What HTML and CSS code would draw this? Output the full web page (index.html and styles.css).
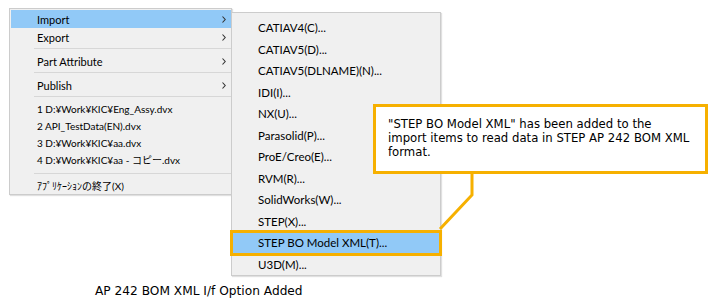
FILE: index.html
```html
<!DOCTYPE html>
<html lang="en">
<head>
<meta charset="utf-8">
<title>AP 242 BOM XML I/f Option Added</title>
<link rel="stylesheet" href="styles.css">
</head>
<body>
<div class="stage">
  <div class="menus">
    <div class="menu main">
      <div class="item active"><span>Import</span><svg class="chev" viewBox="0 0 4 7"><path d="M0.5 0.5 L3.2 3.5 L0.5 6.5"/></svg></div>
      <div class="item"><span>Export</span><svg class="chev" viewBox="0 0 4 7"><path d="M0.5 0.5 L3.2 3.5 L0.5 6.5"/></svg></div>
      <div class="sep"></div>
      <div class="item"><span>Part Attribute</span><svg class="chev" viewBox="0 0 4 7"><path d="M0.5 0.5 L3.2 3.5 L0.5 6.5"/></svg></div>
      <div class="sep"></div>
      <div class="item"><span>Publish</span><svg class="chev" viewBox="0 0 4 7"><path d="M0.5 0.5 L3.2 3.5 L0.5 6.5"/></svg></div>
      <div class="sep"></div>
      <div class="item file"><span>1 D:¥Work¥KIC¥Eng_Assy.dvx</span></div>
      <div class="item file"><span>2 API_TestData(EN).dvx</span></div>
      <div class="item file"><span>3 D:¥Work¥KIC¥aa.dvx</span></div>
      <div class="item file"><span>4 D:¥Work¥KIC¥aa - コピー.dvx</span></div>
      <div class="sep sep-wide"></div>
      <div class="item file"><span>ｱﾌﾟﾘｹｰｼｮﾝの終了(X)</span></div>
    </div>
    <div class="menu sub">
      <div class="sitem">CATIAV4(C)...</div>
      <div class="sitem">CATIAV5(D)...</div>
      <div class="sitem">CATIAV5(DLNAME)(N)...</div>
      <div class="sitem">IDI(I)...</div>
      <div class="sitem">NX(U)...</div>
      <div class="sitem">Parasolid(P)...</div>
      <div class="sitem">ProE/Creo(E)...</div>
      <div class="sitem">RVM(R)...</div>
      <div class="sitem">SolidWorks(W)...</div>
      <div class="sitem">STEP(X)...</div>
      <div class="sitem marked">STEP BO Model XML(T)...</div>
      <div class="sitem">U3D(M)...</div>
    </div>
  </div>
  <svg class="connector" viewBox="0 0 720 300"><polyline points="472,174 472,195 440,229"/></svg>
  <div class="callout">"STEP BO Model XML" has been added to the<br>import items to read data in STEP AP 242 BOM XML format.</div>
  <div class="caption">AP 242 BOM XML I/f Option Added</div>
</div>
</body>
</html>
```
FILE: styles.css
```css
html, body {
  margin: 0;
  padding: 0;
  background: #ffffff;
}
.stage {
  position: relative;
  width: 720px;
  height: 300px;
  overflow: hidden;
}
.menus {
  display: flex;
  align-items: flex-start;
  padding: 8px 0 0 9px;
}
.menu {
  background: #f0f0f0;
  border: 1px solid #cccccc;
  box-sizing: border-box;
  box-shadow: 1px 1px 1px rgba(0, 0, 0, 0.12);
  font-family: Lato, "Noto Sans CJK JP", sans-serif;
  color: #000;
}
.main {
  width: 223px;
  padding: 1px 0 0 1px;
  font-size: 11px;
}
.item {
  display: flex;
  align-items: center;
  justify-content: space-between;
  height: 18px;
  padding: 0 5px 0 26px;
}
.item.active {
  background: #91c9f7;
}
.item.file {
  height: 17px;
  font-size: 10px;
}
.chev {
  width: 4px;
  height: 7px;
  fill: none;
  stroke: #333;
  stroke-width: 1.1;
}
.sep {
  height: 1px;
  background: #d7d7d7;
  margin: 2px 0 3px 23px;
}
.sep.sep-wide {
  margin: 5px 0 3px 23px;
}
.sub {
  width: 210px;
  margin: 4px 0 0 -1px;
  padding: 4px 0 0 0;
  font-size: 11.5px;
}
.sitem {
  height: 21.5px;
  line-height: 21.5px;
  padding-left: 26px;
}
.sitem.marked {
  background: #91c9f7;
  outline: 3px solid #f6b000;
  outline-offset: -1px;
}
.connector {
  position: absolute;
  left: 0;
  top: 0;
  width: 720px;
  height: 300px;
  fill: none;
  stroke: #f6b000;
  stroke-width: 3;
}
.callout {
  position: absolute;
  left: 373px;
  top: 104px;
  width: 335px;
  height: 70px;
  box-sizing: border-box;
  border: 3px solid #f6b000;
  background: #fff;
  padding: 10px 4px 0 12px;
  font-family: "DejaVu Sans", sans-serif;
  font-size: 11.7px;
  line-height: 14px;
  color: #000;
}
.caption {
  margin-top: 8px;
  padding-left: 95px;
  font-family: "DejaVu Sans", sans-serif;
  font-size: 12.2px;
  line-height: 14px;
  color: #000;
}
```
